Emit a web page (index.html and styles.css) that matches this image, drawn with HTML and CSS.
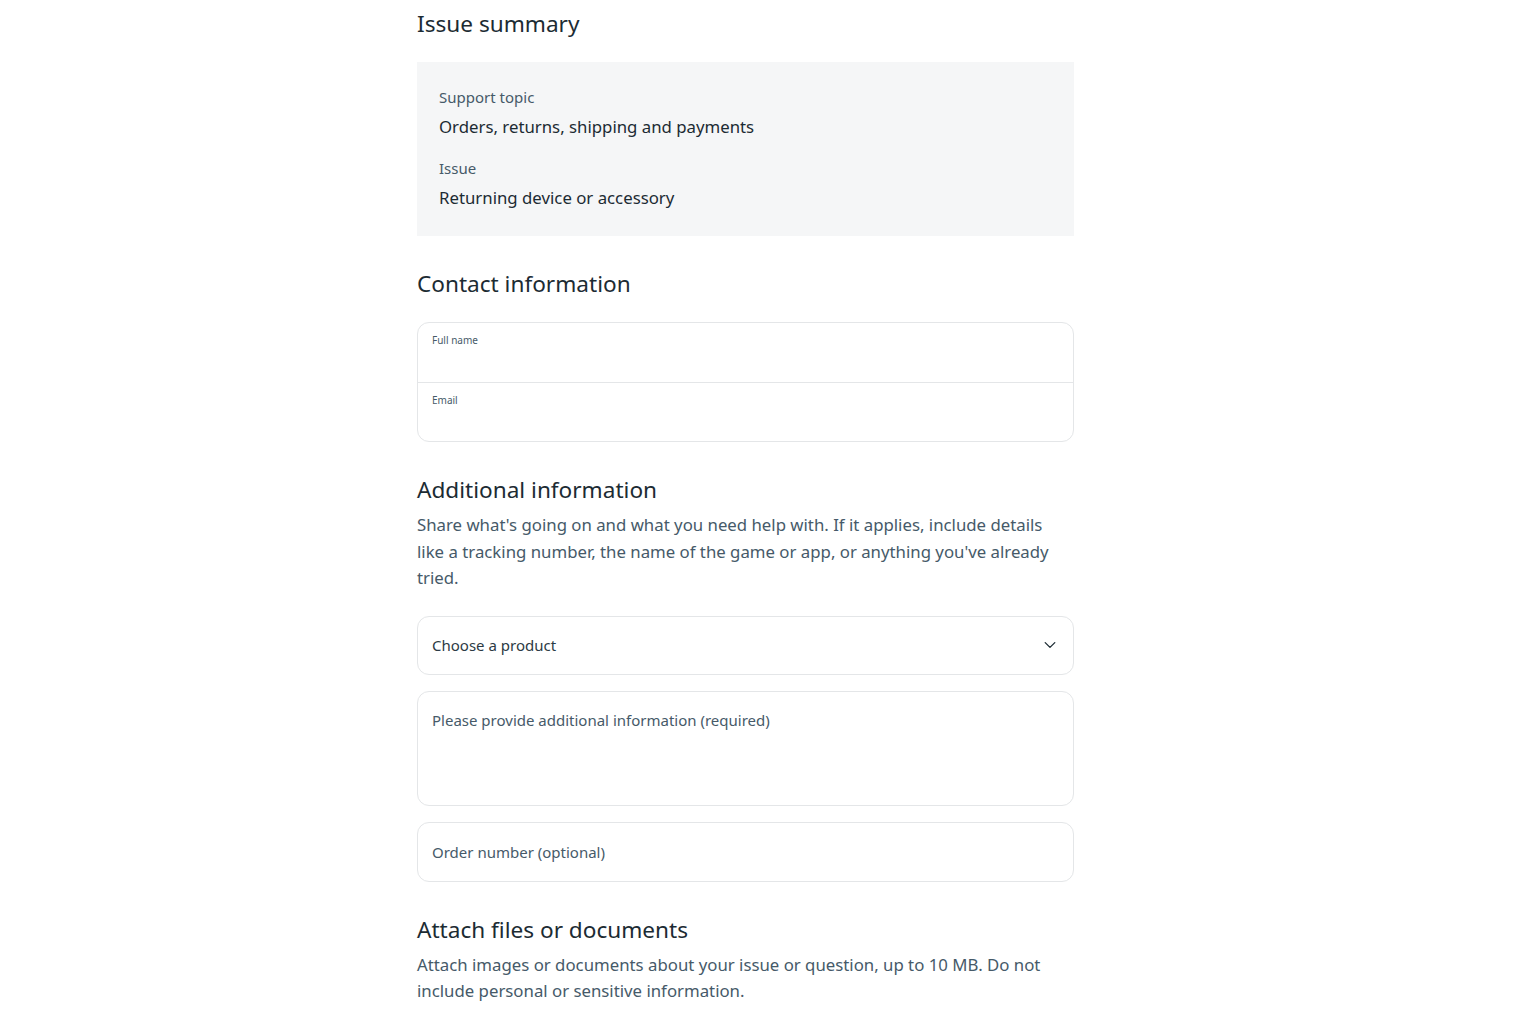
FILE: index.html
```html
<!DOCTYPE html>
<html lang="en">
<head>
<meta charset="utf-8">
<title>Support form</title>
<link rel="stylesheet" href="styles.css">
</head>
<body>
<main class="page">
  <section class="section">
    <h2 class="heading first">Issue summary</h2>
    <div class="summary">
      <div class="summary-item">
        <div class="summary-label">Support topic</div>
        <div class="summary-value">Orders, returns, shipping and payments</div>
      </div>
      <div class="summary-item">
        <div class="summary-label">Issue</div>
        <div class="summary-value">Returning device or accessory</div>
      </div>
    </div>
  </section>

  <section class="section">
    <h2 class="heading">Contact information</h2>
    <div class="field-group">
      <label class="stacked-field">
        <span class="small-label">Full name</span>
        <input class="stacked-input" type="text">
      </label>
      <label class="stacked-field">
        <span class="small-label">Email</span>
        <input class="stacked-input" type="email">
      </label>
    </div>
  </section>

  <section class="section">
    <h2 class="heading tight">Additional information</h2>
    <p class="desc">Share what's going on and what you need help with. If it applies, include details like a tracking number, the name of the game or app, or anything you've already tried.</p>
    <div class="select-box">
      <span class="select-text">Choose a product</span>
      <svg class="chevron" width="14" height="14" viewBox="0 0 14 14" aria-hidden="true"><path d="M2.2 4.6 7 9.4l4.8-4.8" fill="none" stroke="#1c2b33" stroke-width="1.3" stroke-linecap="round" stroke-linejoin="round"/></svg>
    </div>
    <div class="textarea-box">
      <span class="placeholder">Please provide additional information (required)</span>
    </div>
    <div class="input-box">
      <span class="placeholder">Order number (optional)</span>
    </div>
  </section>

  <section class="section">
    <h2 class="heading tight">Attach files or documents</h2>
    <p class="desc">Attach images or documents about your issue or question, up to 10 MB. Do not include personal or sensitive information.</p>
  </section>
</main>
</body>
</html>
```

FILE: styles.css
```css
* { box-sizing: border-box; }
html, body { margin: 0; padding: 0; background: #ffffff; }
body {
  font-family: "Noto Sans", "Open Sans", "Liberation Sans", sans-serif;
  color: #1c2b33;
}
.page {
  width: 657px;
  margin: 0 auto 0 417px;
  padding-top: 8px;
}
.heading {
  font-size: 22.6px;
  font-weight: 400;
  line-height: 32px;
  margin: 0 0 22px;
  color: #1c2b33;
}
.heading.first { margin-bottom: 22px; }
.heading.tight { margin-bottom: 0; }
.section { margin-bottom: 32px; }
.summary {
  background: #f5f6f7;
  padding: 24px 22px 26px;
  display: flex;
  flex-direction: column;
  gap: 18px;
}
.summary-item { display: flex; flex-direction: column; gap: 7px; }
.summary-label { font-size: 15px; line-height: 22px; color: #465a69; }
.summary-value { font-size: 16.8px; line-height: 24px; color: #1c2b33; }
.field-group {
  border: 1px solid #e4e6e8;
  border-radius: 12px;
  overflow: hidden;
}
.stacked-field {
  display: flex;
  flex-direction: column;
  height: 59px;
  padding: 10px 14px 0;
}
.stacked-field + .stacked-field { border-top: 1px solid #e4e6e8; }
.small-label { font-size: 10px; line-height: 14px; color: #465a69; }
.stacked-input {
  border: none;
  outline: none;
  background: transparent;
  font: inherit;
  padding: 0;
  height: 20px;
}
.desc {
  font-size: 16.8px;
  line-height: 26.5px;
  color: #465a69;
  margin: 6px 0 24px;
  max-width: 645px;
}
.select-box, .input-box, .textarea-box {
  border: 1px solid #e4e6e8;
  border-radius: 12px;
  padding: 0 14px;
  margin-bottom: 16px;
}
.select-box {
  height: 59px;
  display: flex;
  align-items: center;
  justify-content: space-between;
}
.select-text { font-size: 15px; color: #2c3a44; }
.chevron { margin-right: 2px; }
.textarea-box {
  height: 115px;
  padding-top: 17px;
}
.input-box {
  height: 60px;
  display: flex;
  align-items: center;
}
.placeholder { font-size: 15px; color: #465a69; line-height: 22px; }
```
